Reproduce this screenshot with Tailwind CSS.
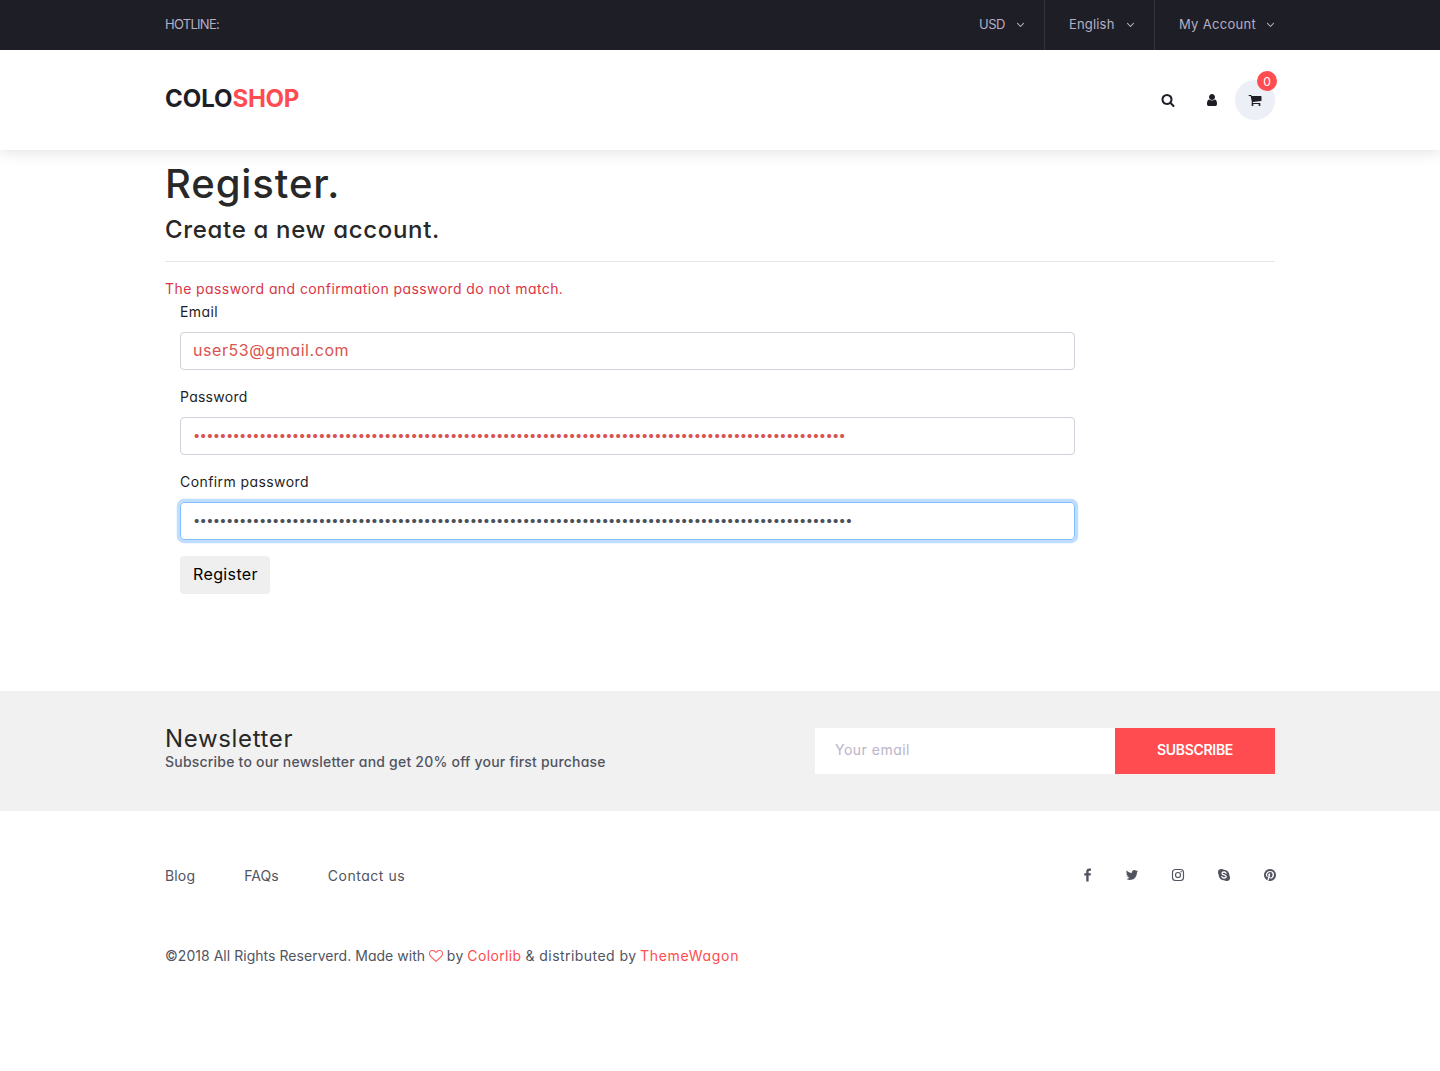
<!DOCTYPE html>
<html lang="en">
<head>
<meta charset="utf-8">
<title>Coloshop</title>
<script src="https://cdn.jsdelivr.net/npm/@tailwindcss/browser@4"></script>
</head>
<body class="bg-white font-[Inter,sans-serif] [font-feature-settings:'cv11'] text-[14px] leading-[23px] text-[#1e1e27]">

<!-- Top bar -->
<div class="h-[50px] bg-[#1e1e27] text-[13px] leading-[48px] text-[#b5aec4]">
  <div class="mx-auto flex w-[1110px] justify-between">
    <div class="tracking-[-0.727px]">HOTLINE:</div>
    <ul class="flex h-[50px]">
      <li class="-ml-px flex w-[90px] justify-between border-r border-[#33333b] pr-[19.5px] pl-6"><span class="tracking-[-0.469px] whitespace-nowrap">USD</span><svg class="mt-[18px] h-[13px] w-[9px]" viewBox="366 0 1060 1792" fill="currentColor"><path d="M1395 736q0 13-10 23l-466 466q-10 10-23 10t-23-10l-466-466q-10-10-10-23t10-23l50-50q10-10 23-10t23 10l393 393 393-393q10-10 23-10t23 10l50 50q10 10 10 23z"/></svg></li>
      <li class="flex w-[110px] justify-between border-r border-[#33333b] pr-[19.5px] pl-6"><span class="tracking-[0.167px] whitespace-nowrap">English</span><svg class="mt-[18px] h-[13px] w-[9px]" viewBox="366 0 1060 1792" fill="currentColor"><path d="M1395 736q0 13-10 23l-466 466q-10 10-23 10t-23-10l-466-466q-10-10-10-23t10-23l50-50q10-10 23-10t23 10l393 393 393-393q10-10 23-10t23 10l50 50q10 10 10 23z"/></svg></li>
      <li class="flex w-[120px] justify-between pl-6"><span class="tracking-[0.298px] whitespace-nowrap">My Account</span><svg class="mt-[18px] h-[13px] w-[9px]" viewBox="366 0 1060 1792" fill="currentColor"><path d="M1395 736q0 13-10 23l-466 466q-10 10-23 10t-23-10l-466-466q-10-10-10-23t10-23l50-50q10-10 23-10t23 10l393 393 393-393q10-10 23-10t23 10l50 50q10 10 10 23z"/></svg></li>
    </ul>
  </div>
</div>

<!-- Main navigation -->
<header class="h-[100px] bg-white shadow-[0_0_16px_rgba(0,0,0,0.15)] [clip-path:inset(0_0_-30px_0)]">
  <div class="mx-auto flex h-full w-[1110px] items-center justify-between">
    <a class="pb-[3px] text-2xl leading-none font-bold"><span class="tracking-[-0.035px]">COLO</span><span class="tracking-[-0.3px] text-[#fe4c50]">SHOP</span></a>
    <div class="flex items-center">
      <div class="flex w-[44px] justify-center"><svg class="h-[14px] w-[14px]" viewBox="0 0 1792 1792" fill="currentColor"><path d="M1216 832q0-185-131.5-316.5t-316.5-131.5-316.5 131.5-131.5 316.5 131.5 316.5 316.5 131.5 316.5-131.5 131.5-316.5zm512 832q0 52-38 90t-90 38q-54 0-90-38l-343-342q-179 124-399 124-143 0-273.5-55.5t-225-150-150-225-55.5-273.5 55.5-273.5 150-225 225-150 273.5-55.5 273.5 55.5 225 150 150 225 55.5 273.5q0 220-124 399l343 343q37 37 37 90z"/></svg></div>
      <div class="flex w-[45.5px] justify-center pr-[1px]"><svg class="h-[14px] w-[14px]" viewBox="0 0 1792 1792" fill="currentColor"><path d="M1536 1399q0 109-62.5 187t-150.5 78h-854q-88 0-150.5-78t-62.5-187q0-85 8.5-160.5t31.5-152 58.5-131 94-89 134.5-34.5q131 128 313 128t313-128q76 0 134.5 34.5t94 89 58.5 131 31.5 152 8.5 160.5zm-256-887q0 159-112.5 271.5t-271.5 112.5-271.5-112.5-112.5-271.5 112.5-271.5 271.5-112.5 271.5 112.5 112.5 271.5z"/></svg></div>
      <div class="relative flex h-10 w-10 items-center justify-center rounded-full bg-[#eceff6]">
        <svg class="h-[14px] w-[14px]" viewBox="0 0 1792 1792" fill="currentColor"><path d="M704 1536q0 52-38 90t-90 38-90-38-38-90 38-90 90-38 90 38 38 90zm896 0q0 52-38 90t-90 38-90-38-38-90 38-90 90-38 90 38 38 90zm128-1088v512q0 24-16.5 42.5t-40.5 21.5l-1044 122q13 60 13 70 0 16-24 64h920q26 0 45 19t19 45-19 45-45 19h-1024q-26 0-45-19t-19-45q0-11 8-31.5t16-36 21.5-40 15.5-29.5l-177-823h-204q-26 0-45-19t-19-45 19-45 45-19h256q16 0 28.5 6.5t19.5 15.5 13 24.5 8 26 5.5 29.5 4.5 26h1201q26 0 45 19t19 45z"/></svg>
        <span class="absolute -top-[9px] -right-[2px] flex h-5 w-5 items-center justify-center rounded-full bg-[#fe4c50] pt-px text-[12px] leading-none text-white">0</span>
      </div>
    </div>
  </div>
</header>

<!-- Registration form -->
<main class="mx-auto h-[541px] w-[1110px] pt-[10px]">
  <h2 class="mb-[7px] text-[40px] leading-[48px] font-medium tracking-[0.9px] text-[#282828]">Register.</h2>
  <h4 class="text-2xl leading-[29px] font-medium tracking-[0.676px] text-[#282828]">Create a new account.</h4>
  <hr class="mt-[17px] mb-[15px] border-[#e5e5e5]">
  <p class="tracking-[0.415px] text-[#dc3545]">The password and confirmation password do not match.</p>
  <form class="flex w-[910px] flex-col items-start pl-[15px]">
    <label class="mb-[9px] tracking-[0.38px]">Email</label>
    <input type="text" value="user53@gmail.com" class="mb-[15px] h-[38px] w-[895px] rounded-[4px] border border-[#ced4da] px-3 pb-[2px] text-base tracking-[0.57px] text-[#d9534f] outline-none">
    <label class="mb-[9px] tracking-[0.26px]">Password</label>
    <input type="password" value="•••••••••••••••••••••••••••••••••••••••••••••••••••••••••••••••••••••••••••••••••••••••••••••••••••" class="mb-[15px] h-[38px] w-[895px] rounded-[4px] border border-[#ced4da] px-3 pb-[2px] text-[13px] tracking-[-0.725px] text-[#d9534f] outline-none">
    <label class="mb-[9px] tracking-[0.42px]">Confirm password</label>
    <input type="password" value="••••••••••••••••••••••••••••••••••••••••••••••••••••••••••••••••••••••••••••••••••••••••••••••••••••" class="mb-4 h-[38px] w-[895px] rounded-[4px] border border-[#80bdff] px-3 pb-[2px] text-[13px] tracking-[-0.725px] text-[#495057] shadow-[0_0_0_3.2px_rgba(0,123,255,0.25)] outline-none">
    <button type="button" class="h-[38px] w-[90px] rounded-[4px] bg-[#efefef] pb-[2px] pl-px text-base tracking-[0.381px] text-black">Register</button>
  </form>
</main>

<!-- Newsletter -->
<section class="h-[120px] bg-[#f1f1f1]">
  <div class="mx-auto flex h-full w-[1110px] items-center justify-between">
    <div class="flex flex-col pb-2">
      <h4 class="text-2xl leading-[29px] tracking-[0.65px] text-[#282828]">Newsletter</h4>
      <p class="leading-[17px] font-medium tracking-[0.208px] text-[#51545f]">Subscribe to our newsletter and get 20% off your first purchase</p>
    </div>
    <div class="flex h-[46px] leading-[44px]">
      <div class="w-[300px] bg-white pl-5 tracking-[0.491px] text-[#b9b4c7]">Your email</div>
      <button type="button" class="w-40 bg-[#fe4c50] pb-[2px] leading-[44px] font-semibold tracking-[-0.309px] text-white">SUBSCRIBE</button>
    </div>
  </div>
</section>

<!-- Footer -->
<footer class="mx-auto w-[1110px] pt-[53px] text-[#51545f]">
  <div class="flex h-6 items-center justify-between">
    <ul class="flex gap-[49px] pb-[2px]"><li class="tracking-[0.15px]">Blog</li><li class="tracking-[0.1px]">FAQs</li><li class="tracking-[0.52px]">Contact us</li></ul>
    <ul class="-mr-[1.5px] flex items-center gap-8 pb-[2px]">
      <li><svg class="h-[14px] w-[10px]" viewBox="320 -64 1280 1792" fill="currentColor"><path d="M1343 12v264h-157q-86 0-116 36t-30 108v189h293l-39 296h-254v759h-306v-759h-255v-296h255v-218q0-186 104-288.5t277-102.5q147 0 228 12z"/></svg></li>
      <li><svg class="h-[14px] w-[14px]" viewBox="0 0 1792 1792" fill="currentColor"><path d="M1684 408q-67 98-162 167 1 14 1 42 0 130-38 259.5t-115.5 248.5-184.5 210.5-258 146-323 54.5q-271 0-496-145 35 4 78 4 225 0 401-138-105-2-188-64.5t-114-159.5q33 5 61 5 43 0 85-11-112-23-185.5-111.5t-73.5-205.5v-4q68 38 146 41-66-44-105-115t-39-154q0-88 44-163 121 149 294.5 238.5t371.5 99.5q-8-38-8-74 0-134 94.5-228.5t228.5-94.5q140 0 236 102 109-21 205-78-37 115-142 178 93-10 186-50z"/></svg></li>
      <li><svg class="h-[14px] w-[14px]" viewBox="0 0 14 14" fill="none" stroke="currentColor" stroke-width="1.15"><rect x="1.5" y="1.5" width="11" height="11" rx="3"/><circle cx="7" cy="7" r="2.5"/><circle cx="10.2" cy="3.8" r=".7" fill="currentColor" stroke="none"/></svg></li>
      <li><svg class="h-[14px] w-[14px]" viewBox="0 0 14 14" fill="currentColor"><circle cx="7" cy="7" r="5.3"/><circle cx="4.3" cy="4.3" r="3.3"/><circle cx="9.7" cy="9.7" r="3.3"/><path d="M9.1 5.2C8.7 4.2 7.9 4 7 4 5.8 4 5 4.6 5 5.4 5 7.3 9.2 6.4 9.2 8.5 9.2 9.5 8.2 10 7.1 10 5.9 10 5.1 9.5 4.9 8.6" fill="none" stroke="#fff" stroke-width="1.3" stroke-linecap="round"/></svg></li>
      <li><svg class="h-[14px] w-[14px]" viewBox="0 0 1792 1792" fill="currentColor"><path d="M1664 896q0 209-103 385.5t-279.5 279.5-385.5 103q-111 0-218-32 59-93 78-164 9-34 54-211 20 39 73 67.5t114 28.5q121 0 216-68.5t147-188.5 52-270q0-114-59.5-214t-172.5-163-255-63q-105 0-196 29t-154.5 77-109 110.5-67 129.5-21.5 134q0 104 40 183t117 111q30 12 38-20 2-7 8-31t8-30q6-23-11-43-51-61-51-151 0-151 104.5-259.5t273.5-108.5q151 0 235.5 82t84.5 213q0 170-68.5 289t-175.5 119q-61 0-98-43.5t-23-104.5q8-35 26.5-93.5t30-103 11.5-75.5q0-50-27-83t-77-33q-62 0-105 57t-43 142q0 73 25 122l-99 418q-17 70-13 177-206-91-333-281t-127-423q0-209 103-385.5t279.5-279.5 385.5-103 385.5 103 279.5 279.5 103 385.5z"/></svg></li>
    </ul>
  </div>
  <p class="mt-14 flex items-center">
    <span class="tracking-[0.035px]">©2018 All Rights Reserverd. Made with</span>
    <svg class="mr-1 ml-[3.5px] h-[14px] w-[14px] text-[#fe4c50]" viewBox="0 0 1792 1792" fill="currentColor"><path d="M1664 596q0-81-21.5-143t-55-98.5-81.5-59.5-94-31-98-8-112 25.5-110.5 64-86.5 72-60 61.5q-18 22-49 22t-49-22q-24-28-60-61.5t-86.5-72-110.5-64-112-25.5-98 8-94 31-81.5 59.5-55 98.5-21.5 143q0 168 187 355l581 560 580-559q188-188 188-356zm128 0q0 221-229 450l-623 600q-18 18-44 18t-44-18l-624-602q-10-8-27.5-26t-55.5-65.5-68-97.5-53.5-121-23.5-138q0-220 127-344t351-124q62 0 126.5 21.5t120 58 95.5 68.5 76 68q36-36 76-68t95.5-68.5 120-58 126.5-21.5q224 0 351 124t127 344z"/></svg>
    <span class="tracking-[0.5px]">by</span>
    <span class="ml-[3.5px] tracking-[0.36px] text-[#fe4c50]">Colorlib</span>
    <span class="ml-1 tracking-[0.45px] whitespace-nowrap">&amp; distributed by</span>
    <span class="ml-[3.5px] tracking-[0.7px] text-[#fe4c50]">ThemeWagon</span>
  </p>
</footer>
</body>
</html>
